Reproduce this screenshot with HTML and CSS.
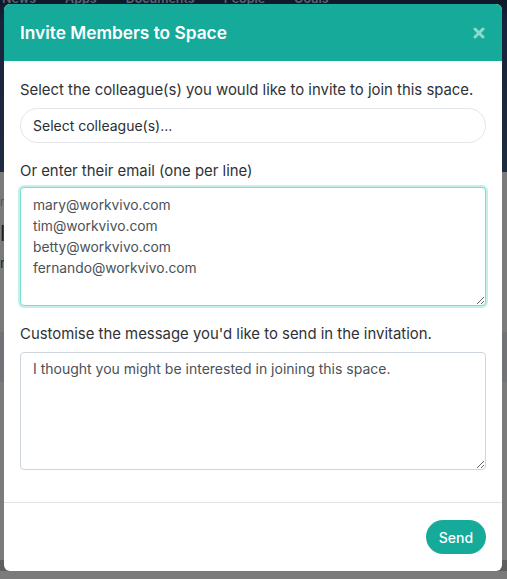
FILE: index.html
```html
<!DOCTYPE html>
<html>
<head>
<meta charset="utf-8">
<link rel="stylesheet" href="styles.css">
</head>
<body>
<div class="page">
  <div class="hero">
    <nav class="nav">
      <span>News</span><span>Apps</span><span>Documents</span><span>People</span><span>Goals</span>
    </nav>
  </div>
  <div class="content">
    <div class="frag f1">r</div>
    <div class="frag f2">l</div>
    <div class="frag f3">n</div>
    <div class="band"></div>
    <div class="band2"></div>
  </div>
</div>

<div class="modal">
  <div class="modal-header">
    <h1 class="modal-title">Invite Members to Space</h1>
    <svg class="close" width="12" height="12" viewBox="0 0 12 12"><path d="M2 2L10 10M10 2L2 10" stroke="#8fd8cf" stroke-width="3" stroke-linecap="round"/></svg>
  </div>
  <div class="modal-body">
    <label class="label">Select the colleague(s) you would like to invite to join this space.</label>
    <div class="select">Select colleague(s)...</div>
    <label class="label l2">Or enter their email (one per line)</label>
    <textarea class="textarea focused">mary@workvivo.com
tim@workvivo.com
betty@workvivo.com
fernando@workvivo.com</textarea>
    <label class="label l3">Customise the message you'd like to send in the invitation.</label>
    <textarea class="textarea plain">I thought you might be interested in joining this space.</textarea>
  </div>
  <div class="modal-footer">
    <button class="send">Send</button>
  </div>
</div>
</body>
</html>
```

FILE: styles.css
```css
* { box-sizing: border-box; }
html, body { margin: 0; padding: 0; }
body {
  width: 507px;
  height: 579px;
  overflow: hidden;
  background: #7b7b7b;
  font-family: Inter, "Noto Sans", sans-serif;
}
.page { width: 507px; height: 579px; }
.hero {
  height: 180px;
  background: linear-gradient(#0b1522 0px, #16233a 30px, #1e2c42 180px);
}
.nav {
  display: flex;
  gap: 29px;
  padding-left: 2px;
  margin-top: -8px;
  font-size: 12.5px;
  font-weight: 600;
  color: #5b6470;
  line-height: 13px;
}
.content { position: relative; height: 399px; }
.frag { position: absolute; left: 0; font-size: 22px; color: #222; }
.f1 { top: 22px; font-size: 12px; color: #555; }
.f2 { top: 48px; }
.f3 { top: 82px; font-size: 14px; }
.band { position: absolute; left: 0; right: 0; top: 160px; height: 50px; background: #717376; }
.band2 { position: absolute; left: 0; right: 0; top: 388px; height: 11px; background: #5f5f5f; }

.modal {
  position: absolute;
  left: 4px;
  top: 4px;
  width: 498px;
  height: 567px;
  background: #fff;
  border-radius: 6px;
  overflow: hidden;
  display: flex;
  flex-direction: column;
}
.modal-header {
  height: 57px;
  background: #16aa9b;
  display: flex;
  align-items: center;
  justify-content: space-between;
  padding: 0 17px 0 16px;
}
.modal-title {
  margin: 0;
  color: #fff;
  font-size: 17.3px;
  font-weight: 600;
}
.modal-body {
  display: flex;
  flex-direction: column;
  padding: 18px 16px 0 16px;
  height: 442px;
  border-bottom: 1px solid #e3e3e3;
}
.label {
  font-size: 14.9px;
  line-height: 22px;
  color: #2f3236;
}
.select {
  margin-top: 7px;
  height: 35px;
  border: 1px solid #e2e4e8;
  border-radius: 18px;
  padding: 0 12px;
  display: flex;
  align-items: center;
  font-size: 14px;
  color: #2a2e33;
}
.l2 { margin-top: 17px; }
.l3 { margin-top: 17px; }
.textarea {
  display: block;
  width: 466px;
  font-family: Inter, "Noto Sans", sans-serif;
  font-size: 14px;
  line-height: 21px;
  color: #4b5158;
  padding: 6px 12px;
  border-radius: 4px;
  resize: vertical;
  outline: none;
}
.focused {
  margin-top: 5px;
  height: 119px;
  padding-top: 7px;
  border: 1px solid #74e0d2;
  box-shadow: 0 0 0 2px #c7efea;
  font-size: 13.8px;
}
.plain {
  margin-top: 7px;
  height: 118px;
  padding-top: 5px;
  border: 1px solid #cfd5dc;
}
.modal-footer {
  flex: 1;
  display: flex;
  justify-content: flex-end;
  align-items: center;
  padding: 0 16px;
}
.send {
  width: 60px;
  height: 34px;
  border: none;
  border-radius: 17px;
  background: #16aa9b;
  color: #fff;
  font-family: Inter, "Noto Sans", sans-serif;
  font-size: 14px;
  font-weight: 500;
  padding: 0;
}
```
